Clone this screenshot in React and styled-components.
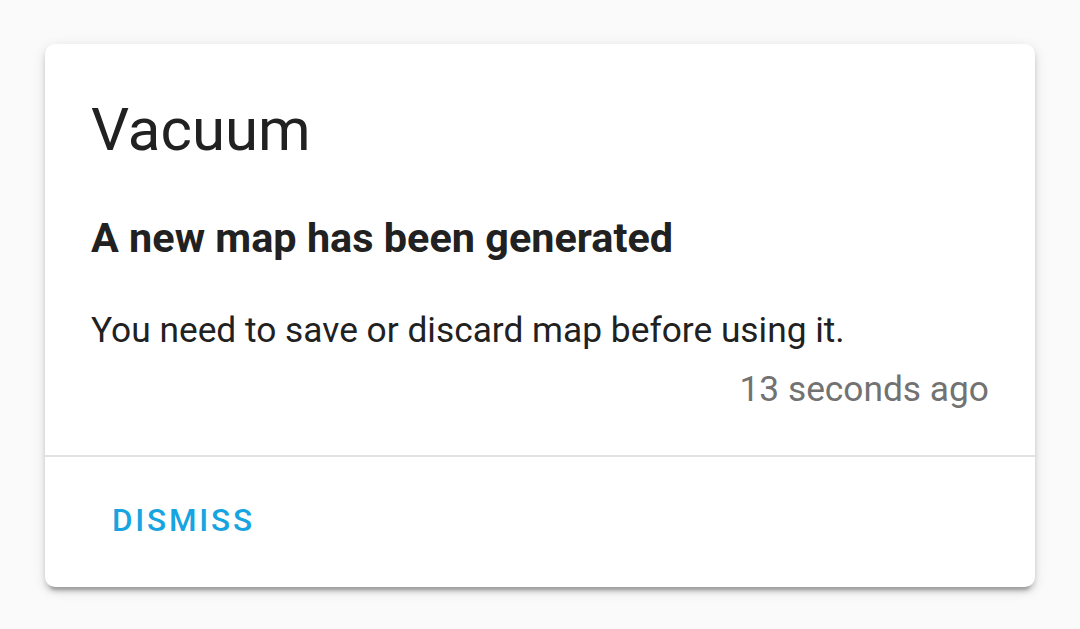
import styled, { createGlobalStyle } from 'styled-components'

const GlobalStyle = createGlobalStyle`
  html, body {
    margin: 0;
    padding: 0;
    background: #fafafa;
    font-family: Roboto, 'Noto Sans', sans-serif;
    -webkit-font-smoothing: antialiased;
  }
`

const Page = styled.div`
  padding: 44px 45px;
`

const Card = styled.div`
  background: #ffffff;
  border-radius: 10px;
  box-shadow: 0 5px 5px 0 rgba(0, 0, 0, 0.14), 0 3px 13px 0 rgba(0, 0, 0, 0.12),
    0 8px 3px -5px rgba(0, 0, 0, 0.2);
  overflow: hidden;
`

const Content = styled.div`
  padding: 43.5px 46px 40px;
  color: #212121;
`

const Title = styled.div`
  font-size: 60px;
  line-height: 84px;
  font-weight: 400;
`

const Heading = styled.div`
  margin-top: 40.4px;
  font-size: 41.4px;
  line-height: 52px;
  font-weight: 700;
`

const Message = styled.div`
  margin-top: 40px;
  font-size: 35.3px;
  line-height: 52px;
`

const Time = styled.div`
  margin-top: 7px;
  font-size: 35.3px;
  line-height: 52px;
  color: #727272;
  text-align: right;
`

const Actions = styled.div`
  border-top: 2px solid #e2e2e2;
  padding: 44.25px 46px 45.75px;
  display: flex;
`

const TextButton = styled.button`
  border: none;
  background: none;
  padding: 0 21px;
  margin: 0;
  font-family: Roboto, 'Noto Sans', sans-serif;
  font-size: 31.5px;
  line-height: 40px;
  font-weight: 500;
  letter-spacing: 0.0892em;
  text-transform: uppercase;
  color: #18a4e0;
  cursor: pointer;
`

const notification = {
  title: 'Vacuum',
  heading: 'A new map has been generated',
  message: 'You need to save or discard map before using it.',
  time: '13 seconds ago',
}

export default function App() {
  return (
    <>
      <GlobalStyle />
      <Page>
        <Card>
          <Content>
            <Title>{notification.title}</Title>
            <Heading>{notification.heading}</Heading>
            <Message>{notification.message}</Message>
            <Time>{notification.time}</Time>
          </Content>
          <Actions>
            <TextButton>Dismiss</TextButton>
          </Actions>
        </Card>
      </Page>
    </>
  )
}
